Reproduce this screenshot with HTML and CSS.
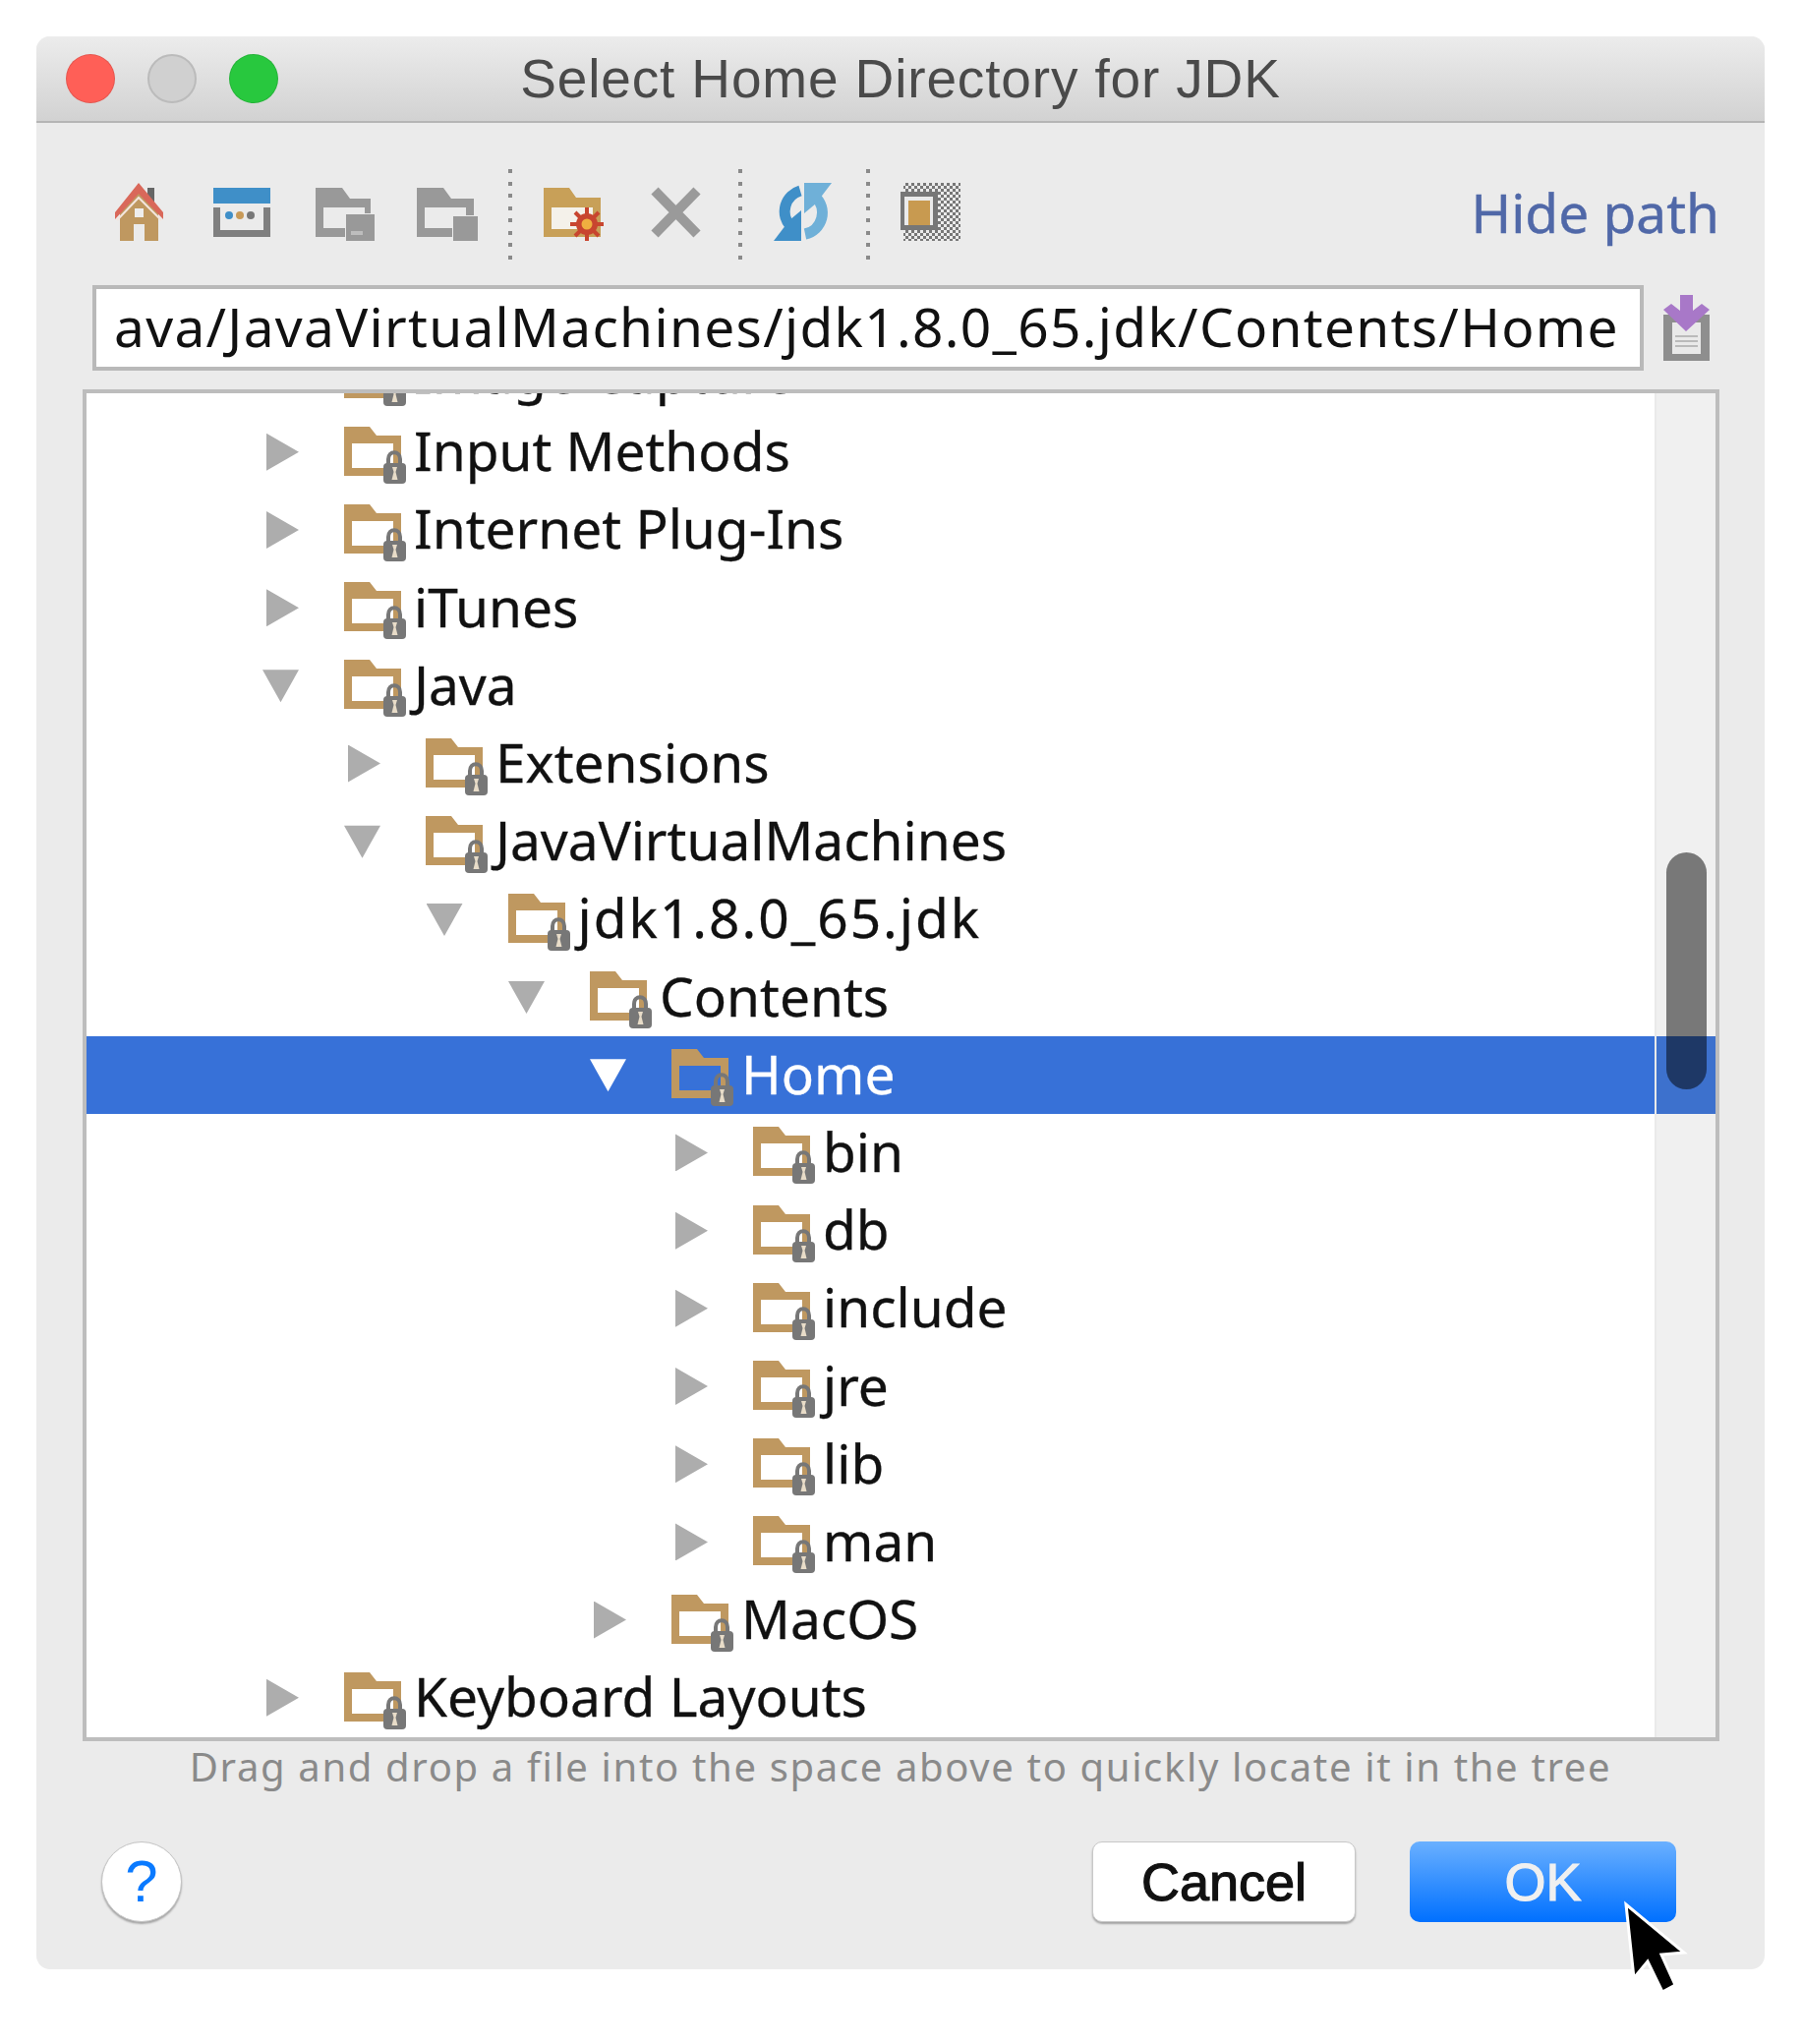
FILE: index.html
```html
<!DOCTYPE html>
<html>
  <head>
    <title>Select Home Directory for JDK</title>
    <link rel="stylesheet" href="styles.css">
  </head>
  <body>

    <svg class="defs" width="0" height="0">
      <defs>
        <symbol id="folder" viewBox="0 0 64 58">
          <path fill="#bf9860" fill-rule="evenodd" d="M0 0H26L33 9H58V50H0ZM8 17V42H50V17Z"/>
          <path fill="none" stroke="#777" stroke-width="4" d="M45 40V33C45 24 57 24 57 33V40"/>
          <rect x="40" y="37" width="23" height="21" rx="4" fill="#777"/>
          <path fill="#e8dcc8" d="M49 41H54L52.5 46L54.500 54H48.500L50.500 46Z"/>
        </symbol>
        <pattern id="checks" width="6" height="6" patternUnits="userSpaceOnUse">
          <rect width="3" height="3" fill="#777"/>
          <rect x="3" y="3" width="3" height="3" fill="#777"/>
        </pattern>
      </defs>
    </svg>

    <div class="window">
      <div class="titlebar">
        <span class="light red"></span>
        <span class="light off"></span>
        <span class="light green"></span>
        <div class="title">Select Home Directory for JDK</div>
      </div>

      <div class="toolbar">
        <!-- home -->
        <svg class="tool" viewBox="-7 0 64 59">
          <rect x="33" y="5" width="7" height="20" fill="#666"/>
          <path fill="#bf9860" d="M5 28L24 9L44 28V59H30V42H19V59H5Z"/>
          <path fill="#d9685a" d="M24 0L49 30V37L24 11L0 37V30Z"/>
          <path fill="none" stroke="#f3e6de" stroke-width="2" d="M2 38L24 15L47 38"/>
          <rect x="20" y="26" width="9" height="9" fill="#eee"/>
        </svg>
        <!-- project window -->
        <svg class="tool" viewBox="-3 -5 64 59">
          <rect width="58" height="16" fill="#3f8fc8"/>
          <path fill="#7f7f7f" d="M0 20H7V43H51V20H58V50H0Z"/>
          <circle cx="16" cy="28" r="4" fill="#3f8fc8"/>
          <circle cx="27" cy="28" r="4" fill="#c89a58"/>
          <circle cx="38" cy="28" r="4" fill="#777"/>
        </svg>
        <!-- module -->
        <svg class="tool" viewBox="-3 -5 64 59">
          <path fill="#999" fill-rule="evenodd" d="M0 0H27L35 11H56V50H0ZM8 20V41H50V20Z"/>
          <rect x="30" y="26" width="30" height="30" fill="#ebebeb"/>
          <rect x="31" y="27" width="29" height="29" fill="#999"/>
          <rect x="36" y="44" width="12" height="4" fill="#bdbdbd"/>
        </svg>
        <!-- library -->
        <svg class="tool" viewBox="-2 -5 64 59">
          <path fill="#999" fill-rule="evenodd" d="M0 0H27L35 11H58V50H0ZM8 20V41H50V20Z"/>
          <rect x="36" y="28" width="28" height="26" fill="#ebebeb"/>
          <rect x="37" y="29" width="26" height="25" fill="#999"/>
        </svg>
        <span class="sep"></span>
        <!-- new folder -->
        <svg class="tool" viewBox="-1 -5 64 59">
          <path fill="#c8a058" fill-rule="evenodd" d="M0 0H26L33 10H58V50H0ZM8 20V42H50V20Z"/>
          <rect x="8" y="20" width="42" height="22" fill="#f4f1ea"/>
          <path stroke="#c8452f" stroke-width="4" d="M44 20V54M27 37H61M32 25L56 49M32 49L56 25"/>
          <circle cx="44" cy="37" r="11" fill="#c8452f"/>
          <circle cx="44" cy="37" r="5.500" fill="#f0b040"/>
        </svg>
        <!-- delete -->
        <svg class="tool" viewBox="-7 -5 64 59">
          <path stroke="#9a9a9a" stroke-width="10" d="M3 3L46 47M46 3L3 47"/>
        </svg>
        <span class="sep"></span>
        <!-- refresh -->
        <svg class="tool" viewBox="-1 0 64 59">
          <path fill="none" stroke="#3f8fc8" stroke-width="11" d="M27 8A22 22 0 0 0 17 44"/>
          <path fill="#3f8fc8" d="M0 59L16 38L28 28V59Z"/>
          <path fill="none" stroke="#6fb0d8" stroke-width="11" d="M32 52A22 22 0 0 0 42 14"/>
          <path fill="#6fb0d8" d="M59 0L43 21L31 31V0Z"/>
        </svg>
        <span class="sep"></span>
        <!-- show hidden -->
        <svg class="tool" viewBox="1 0 64 59">
          <rect x="4" width="58" height="59" fill="url(#checks)"/>
          <rect x="2.500" y="11.500" width="34" height="34" fill="#ebebeb" stroke="#777" stroke-width="5"/>
          <rect x="9" y="18" width="22" height="25" fill="#c89a50"/>
        </svg>
        <div class="hide-path">Hide path</div>
      </div>

      <div class="path-row">
        <div class="path-field">ava/JavaVirtualMachines/jdk1.8.0_65.jdk/Contents/Home</div>
        <svg class="path-icon" viewBox="0 0 47 67">
          <rect y="20" width="47" height="47" fill="#8e8e8e"/>
          <rect x="9" y="28" width="29" height="32" fill="#e9e9e9"/>
          <path stroke="#aaa" stroke-width="1.500" d="M12 42H35M12 47H35M12 52H35"/>
          <path fill="#a878c8" d="M17 0H30V16L39 9L47 15L23 37L0 15L8 9L17 16Z"/>
        </svg>
      </div>

      <div class="tree">
        <div class="rows">
          <div class="row l0"><span class="arr right"></span><svg class="folder"><use href="#folder"/></svg><span class="name">Image Capture</span></div>
          <div class="row l0"><span class="arr right"></span><svg class="folder"><use href="#folder"/></svg><span class="name">Input Methods</span></div>
          <div class="row l0"><span class="arr right"></span><svg class="folder"><use href="#folder"/></svg><span class="name">Internet Plug-Ins</span></div>
          <div class="row l0"><span class="arr right"></span><svg class="folder"><use href="#folder"/></svg><span class="name">iTunes</span></div>
          <div class="row l0"><span class="arr down"></span><svg class="folder"><use href="#folder"/></svg><span class="name">Java</span></div>
          <div class="row l1"><span class="arr right"></span><svg class="folder"><use href="#folder"/></svg><span class="name">Extensions</span></div>
          <div class="row l1"><span class="arr down"></span><svg class="folder"><use href="#folder"/></svg><span class="name">JavaVirtualMachines</span></div>
          <div class="row l2"><span class="arr down"></span><svg class="folder"><use href="#folder"/></svg><span class="name ver">jdk1.8.0_65.jdk</span></div>
          <div class="row l3"><span class="arr down"></span><svg class="folder"><use href="#folder"/></svg><span class="name">Contents</span></div>
          <div class="row l4 selected"><span class="arr down"></span><svg class="folder"><use href="#folder"/></svg><span class="name">Home</span></div>
          <div class="row l5"><span class="arr right"></span><svg class="folder"><use href="#folder"/></svg><span class="name">bin</span></div>
          <div class="row l5"><span class="arr right"></span><svg class="folder"><use href="#folder"/></svg><span class="name">db</span></div>
          <div class="row l5"><span class="arr right"></span><svg class="folder"><use href="#folder"/></svg><span class="name">include</span></div>
          <div class="row l5"><span class="arr right"></span><svg class="folder"><use href="#folder"/></svg><span class="name">jre</span></div>
          <div class="row l5"><span class="arr right"></span><svg class="folder"><use href="#folder"/></svg><span class="name">lib</span></div>
          <div class="row l5"><span class="arr right"></span><svg class="folder"><use href="#folder"/></svg><span class="name">man</span></div>
          <div class="row l4"><span class="arr right"></span><svg class="folder"><use href="#folder"/></svg><span class="name">MacOS</span></div>
          <div class="row l0"><span class="arr right"></span><svg class="folder"><use href="#folder"/></svg><span class="name">Keyboard Layouts</span></div>
        </div>
        <div class="gutter"><div class="thumb"></div></div>
      </div>

      <div class="hint">Drag and drop a file into the space above to quickly locate it in the tree</div>

      <div class="buttons">
        <div class="help">?</div>
        <div class="btn cancel">Cancel</div>
        <div class="btn ok">OK</div>
      </div>
    </div>

    <!-- mouse pointer -->
    <svg class="cursor" viewBox="0 0 70 100">
      <path fill="#000" stroke="#fff" stroke-width="3" d="M6 4L14 79L28 62L43 93L56 86L42 55L65 53Z"/>
    </svg>

  </body>
</html>
```

FILE: styles.css
```css
body, html { margin: 0; padding: 0; background: #fff; }
body { position: relative; height: 2079px; overflow: hidden; font-family: "Noto Sans", sans-serif; }
.defs { position: absolute; }

.window {
  width: 1758px;
  height: 1966px;
  margin: 37px 0 0 37px;
  background: #ebebeb;
  border-radius: 14px;
  overflow: hidden;
}

.titlebar {
  position: relative;
  display: flex;
  align-items: center;
  gap: 33px;
  height: 86px;
  padding-left: 30px;
  background: linear-gradient(#ececec, #d2d2d2);
  border-bottom: 2px solid #b5b5b5;
}
.light { width: 50px; height: 50px; border-radius: 50%; box-sizing: border-box; border: 1px solid rgba(0,0,0,0.1); }
.red { background: #ff5f57; }
.off { background: #d0d0d0; border: 2px solid #bbb; }
.green { background: #28c83e; }
.title {
  position: absolute;
  left: 0;
  right: 0;
  text-align: center;
  font-family: "Liberation Sans", sans-serif;
  font-size: 55px;
  letter-spacing: 0.85px;
  color: #4a4a4a;
}

.toolbar {
  display: flex;
  align-items: center;
  height: 149px;
  padding: 16px 46px 0 73px;
}
.tool { width: 64px; height: 59px; flex: none; margin-right: 40px; }
.tool:has(+ .sep) { margin-right: 0; }
.sep {
  width: 4px;
  height: 93px;
  margin: 6px 31px 0;
  flex: none;
  background: repeating-linear-gradient(#8a8a8a 0 4px, transparent 4px 12.500px);
}
.hide-path { margin-left: auto; font-size: 55px; color: #5068a8; -webkit-text-stroke: 0.4px; }

.path-row { display: flex; align-items: center; height: 87px; padding-left: 57px; }
.path-field {
  width: 1578px;
  height: 87px;
  box-sizing: border-box;
  flex: none;
  padding-left: 18px;
  background: #fff;
  border: 4px solid #b9b9b9;
  font-size: 55px;
  letter-spacing: 1.3px;
  line-height: 76px;
  color: #111;
  white-space: nowrap;
  overflow: hidden;
}
.path-icon { width: 47px; height: 67px; margin-left: 20px; flex: none; }

.tree {
  position: relative;
  width: 1665px;
  height: 1375px;
  box-sizing: border-box;
  margin: 19px 0 0 47px;
  background: #fff;
  border: 4px solid #bdbdbd;
  overflow: hidden;
}
.rows { margin-top: -59px; }
.row {
  display: flex;
  align-items: center;
  height: 79.2px;
  font-size: 55px;
  color: #111;
  white-space: nowrap;
}
.name { margin-bottom: 4px; -webkit-text-stroke: 0.3px; }
.ver { letter-spacing: 2px; }
.l0 { padding-left: 179px; }
.l1 { padding-left: 262px; }
.l2 { padding-left: 345.500px; }
.l3 { padding-left: 429px; }
.l4 { padding-left: 512px; }
.l5 { padding-left: 595px; }
.selected { background: #3771d8; color: #fff; }

.arr { display: block; width: 37px; height: 38px; flex: none; margin-right: 46px; background: #adadad; }
.arr.right { clip-path: polygon(4px 0, 37px 19px, 4px 38px); }
.arr.down { clip-path: polygon(0 3px, 37px 3px, 18.500px 36px); }
.selected .arr { background: #fff; }

.folder { width: 64px; height: 58px; flex: none; margin: 6px 7px 0 0; }

.gutter {
  position: absolute;
  top: 0;
  right: 0;
  bottom: 0;
  width: 60px;
  border-left: 2px solid #eaeaea;
  background: rgba(112,112,112,0.105);
}
.thumb {
  position: absolute;
  top: 467px;
  left: 10px;
  width: 41px;
  height: 241px;
  border-radius: 21px;
  background: rgba(0,0,0,0.5);
}

.hint {
  margin-top: 2px;
  height: 50px;
  line-height: 48px;
  text-align: center;
  font-size: 40px;
  letter-spacing: 1.65px;
  color: #8a8a8a;
}

.buttons { display: flex; align-items: center; margin-top: 50px; padding-left: 66px; }
.help {
  width: 82px;
  height: 82px;
  box-sizing: border-box;
  border-radius: 50%;
  background: #fff;
  border: 1px solid #c4c4c4;
  box-shadow: 0 2px 2px rgba(0,0,0,0.3);
  text-align: center;
  font-family: "Liberation Sans", sans-serif;
  font-size: 60px;
  line-height: 80px;
  color: #0a7aff;
}
.btn {
  height: 82px;
  box-sizing: border-box;
  text-align: center;
  font-family: "Liberation Sans", sans-serif;
  font-size: 54px;
  -webkit-text-stroke: 1.2px;
  border-radius: 10px;
}
.cancel {
  width: 268px;
  margin-left: auto;
  background: #fff;
  border: 1px solid #c8c8c8;
  box-shadow: 0 2px 2px rgba(0,0,0,0.3);
  line-height: 80px;
  color: #111;
}
.ok {
  width: 271px;
  margin: 0 90px 0 55px;
  background: linear-gradient(#6ab0ff, #0070ff);
  line-height: 82px;
  color: #f0f0f0;
}

.cursor { position: absolute; left: 1648px; top: 1933px; width: 70px; height: 100px; }
```
